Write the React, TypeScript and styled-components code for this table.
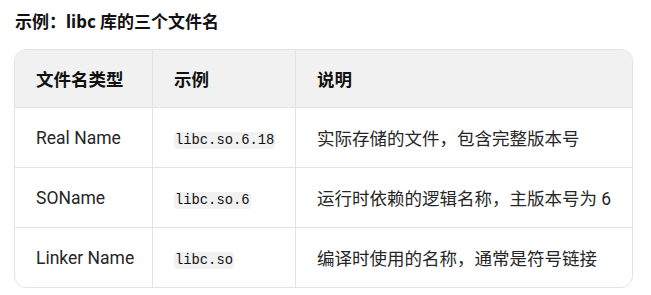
import React from 'react';
import styled, { createGlobalStyle } from 'styled-components';

const GlobalStyle = createGlobalStyle`
  body {
    margin: 0;
    background: #ffffff;
    font-family: "Noto Sans", "Noto Sans CJK SC", sans-serif;
    color: #1f1f1f;
  }
`;

const Page = styled.div`
  padding: 10px 14px 0 14px;
  width: 619px;
`;

const Title = styled.h3`
  margin: 0 0 16px 1px;
  font-size: 17px;
  line-height: 23px;
  font-weight: 700;
  color: #111;
`;

const TableBox = styled.div`
  border: 1px solid #e3e3e3;
  border-radius: 12px;
  overflow: hidden;
`;

const Table = styled.table`
  width: 100%;
  border-collapse: collapse;
  table-layout: fixed;
  font-family: Roboto, "Noto Sans CJK SC", sans-serif;
`;

const HeadCell = styled.th<{ $w?: number }>`
  width: ${p => (p.$w ? `${p.$w}px` : 'auto')};
  height: 57px;
  padding: 0 0 0 21px;
  background: #f1f1f1;
  text-align: left;
  font-size: 17.5px;
  font-weight: 700;
  color: #111;
  border-left: 1px solid #e3e3e3;
  border-bottom: 1px solid #e3e3e3;
  &:first-child { border-left: none; }
`;

const Row = styled.tr`
  &:not(:last-child) td { border-bottom: 1px solid #e3e3e3; }
`;

const Cell = styled.td`
  height: 59px;
  padding: 0 0 0 21px;
  font-size: 17.5px;
  color: #262626;
  border-left: 1px solid #e3e3e3;
  &:first-child { border-left: none; }
`;

const Code = styled.code`
  font-family: "Liberation Mono", "DejaVu Sans Mono", monospace;
  font-size: 13.8px;
  background: #f1f1f1;
  border-radius: 4px;
  padding: 1px 1px;
  color: #111;
`;

const rows = [
  { type: 'Real Name', code: 'libc.so.6.18', desc: '实际存储的文件，包含完整版本号' },
  { type: 'SOName', code: 'libc.so.6', desc: '运行时依赖的逻辑名称，主版本号为 6' },
  { type: 'Linker Name', code: 'libc.so', desc: '编译时使用的名称，通常是符号链接' },
];

export default function App() {
  return (
    <>
      <GlobalStyle />
      <Page>
        <Title>示例：libc 库的三个文件名</Title>
        <TableBox>
          <Table>
            <thead>
              <tr>
                <HeadCell $w={116}>文件名类型</HeadCell>
                <HeadCell $w={121}>示例</HeadCell>
                <HeadCell>说明</HeadCell>
              </tr>
            </thead>
            <tbody>
              {rows.map(r => (
                <Row key={r.type}>
                  <Cell>{r.type}</Cell>
                  <Cell><Code>{r.code}</Code></Cell>
                  <Cell>{r.desc}</Cell>
                </Row>
              ))}
            </tbody>
          </Table>
        </TableBox>
      </Page>
    </>
  );
}
